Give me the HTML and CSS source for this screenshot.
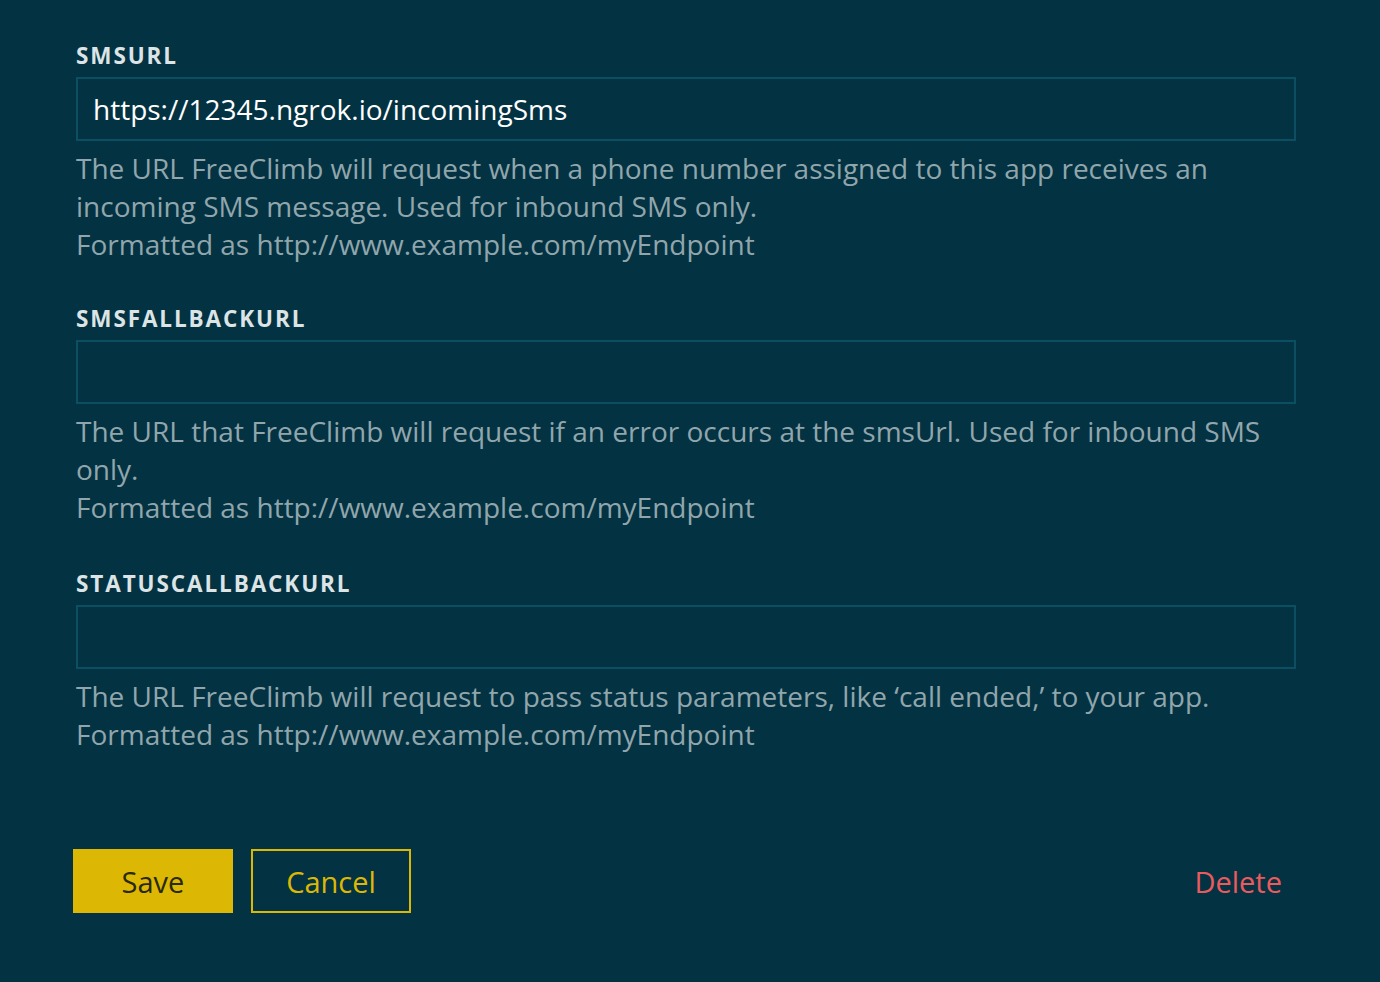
FILE: index.html
```html
<!DOCTYPE html>
<html lang="en">
<head>
  <meta charset="UTF-8">
  <title>Application settings</title>
  <link rel="stylesheet" href="styles.css">
</head>
<body>

<form class="app-form">
  <!-- SMS url -->
  <div class="field">
    <label class="field-label" for="smsUrl">SMSURL</label>
    <input class="field-input" id="smsUrl" type="text" value="https://12345.ngrok.io/incomingSms">
    <p class="field-help">
      The URL FreeClimb will request when a phone number assigned to this app receives an incoming SMS message. Used for inbound SMS only.<br>
      Formatted as http://www.example.com/myEndpoint
    </p>
  </div>

  <!-- SMS fallback url -->
  <div class="field">
    <label class="field-label" for="smsFallbackUrl">SMSFALLBACKURL</label>
    <input class="field-input" id="smsFallbackUrl" type="text" value="">
    <p class="field-help">
      The URL that FreeClimb will request if an error occurs at the smsUrl. Used for inbound SMS only.<br>
      Formatted as http://www.example.com/myEndpoint
    </p>
  </div>

  <!-- Status callback url -->
  <div class="field">
    <label class="field-label" for="statusCallbackUrl">STATUSCALLBACKURL</label>
    <input class="field-input" id="statusCallbackUrl" type="text" value="">
    <p class="field-help">
      The URL FreeClimb will request to pass status parameters, like ‘call ended,’ to your app.<br>
      Formatted as http://www.example.com/myEndpoint
    </p>
  </div>

  <div class="form-actions">
    <button type="button" class="btn btn-save">Save</button>
    <button type="button" class="btn btn-cancel">Cancel</button>
    <button type="button" class="btn-delete">Delete</button>
  </div>
</form>

</body>
</html>
```

FILE: styles.css
```css
/* General styles */
html, body {
  margin: 0;
  background-color: #033242;
}

body {
  font-family: "Open Sans", "Noto Sans", sans-serif;
}

/* Form */
.app-form {
  width: 1220px;
  padding: 42px 0 0 76px;
}

.field {
  margin-bottom: 42px;
}

.field:nth-child(2) {
  margin-bottom: 44px;
}

.field-label {
  display: block;
  color: #dce4e6;
  font-size: 22.5px;
  font-weight: 700;
  letter-spacing: 1.9px;
  line-height: 28px;
  margin-bottom: 7px;
}

.field-input {
  display: block;
  box-sizing: border-box;
  width: 100%;
  height: 64px;
  padding: 0 15px;
  background: transparent;
  border: 2px solid #0c4e62;
  color: #ffffff;
  font-family: inherit;
  font-size: 28px;
  outline: none;
}

.field-help {
  margin: 8px 0 0;
  color: #91a6ac;
  font-size: 28px;
  line-height: 38px;
}

/* Buttons */
.form-actions {
  display: flex;
  align-items: center;
  gap: 18px;
  margin: 96px 0 0 -3px;
  width: 1209px;
}

.btn {
  box-sizing: border-box;
  width: 160px;
  height: 64px;
  font-family: inherit;
  font-size: 29px;
  font-weight: 500;
  cursor: pointer;
}

.btn-save {
  background-color: #dcb805;
  border: none;
  color: #2a290b;
}

.btn-cancel {
  background: transparent;
  border: 2px solid #dcb805;
  color: #dcb805;
}

.btn-delete {
  margin-left: auto;
  background: none;
  border: none;
  padding: 0;
  color: #ea5a5e;
  font-family: inherit;
  font-size: 29px;
  font-weight: 500;
  cursor: pointer;
}
```
